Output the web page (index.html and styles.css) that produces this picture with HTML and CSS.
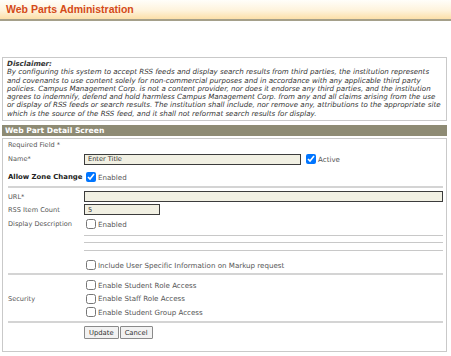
FILE: index.html
```html
<!DOCTYPE html>
<html lang="en">
<head>
  <meta charset="UTF-8" />
  <title>Web Parts Administration</title>
  <link rel="stylesheet" href="styles.css">
</head>
<body>
  <div class="page-header">
    <h1>Web Parts Administration</h1>
  </div>

  <div class="disclaimer">
    <b>Disclaimer:</b><br>
    By configuring this system to accept RSS feeds and display search results from third parties, the institution represents<br>
    and covenants to use content solely for non-commercial purposes and in accordance with any applicable third party<br>
    policies. Campus Management Corp. is not a content provider, nor does it endorse any third parties, and the institution<br>
    agrees to indemnify, defend and hold harmless Campus Management Corp. from any and all claims arising from the use<br>
    or display of RSS feeds or search results. The institution shall include, nor remove any, attributions to the appropriate site<br>
    which is the source of the RSS feed, and it shall not reformat search results for display.
  </div>

  <div class="section-bar">Web Part Detail Screen</div>

  <div class="detail-box">
    <div class="row row-required">Required Field *</div>

    <div class="row row-name">
      <label class="label">Name*</label>
      <input type="text" class="field field-title" value="Enter Title" />
      <input type="checkbox" class="check" checked />
      <span class="check-text">Active</span>
    </div>

    <div class="row row-zone">
      <label class="label label-bold">Allow Zone Change</label>
      <input type="checkbox" class="check" checked />
      <span class="check-text">Enabled</span>
    </div>

    <div class="rule rule-zone"></div>

    <div class="row row-url">
      <label class="label">URL*</label>
      <input type="text" class="field field-url" value="" />
    </div>

    <div class="row row-count">
      <label class="label">RSS Item Count</label>
      <input type="text" class="field field-count" value="5" />
    </div>

    <div class="row row-desc">
      <label class="label">Display Description</label>
      <input type="checkbox" class="check" />
      <span class="check-text">Enabled</span>
    </div>

    <div class="sub-rules">
      <div class="rule-sub sub-1"></div>
      <div class="rule-sub sub-2"></div>
      <div class="rule-sub sub-3"></div>
    </div>

    <div class="row row-include">
      <span class="label"></span>
      <input type="checkbox" class="check" />
      <span class="check-text">Include User Specific Information on Markup request</span>
    </div>

    <div class="rule rule-include"></div>

    <div class="security">
      <span class="label">Security</span>
      <div class="security-list">
        <div class="sec-item"><input type="checkbox" class="check" /><span class="check-text">Enable Student Role Access</span></div>
        <div class="sec-item"><input type="checkbox" class="check" /><span class="check-text">Enable Staff Role Access</span></div>
        <div class="sec-item"><input type="checkbox" class="check" /><span class="check-text">Enable Student Group Access</span></div>
      </div>
    </div>

    <div class="rule rule-security"></div>

    <div class="buttons">
      <button type="button">Update</button>
      <button type="button">Cancel</button>
    </div>
  </div>
</body>
</html>
```

FILE: styles.css
```css
body {
  margin: 0;
  font-family: "DejaVu Sans", Verdana, sans-serif;
  font-size: 6.6px;
  color: #555;
  background: #fff;
}
.page-header {
  height: 19px;
  background: linear-gradient(to bottom, #fffefa 0%, #fef3dc 55%, #fcdfa8 100%);
  border-bottom: 2px solid #a5a08a;
}
h1 {
  margin: 0;
  padding: 3px 0 0 6px;
  font-family: "Liberation Sans", Arial, sans-serif;
  font-size: 10.5px;
  font-weight: bold;
  color: #d44a18;
  line-height: 12px;
}
.disclaimer {
  margin: 36px 4px 0 2px;
  border: 1px solid #c9c9c9;
  padding: 2px 4px 2px 4px;
  font-style: italic;
  font-size: 7.1px;
  line-height: 8.3px;
  color: #333;
  white-space: nowrap;
  overflow: hidden;
}
.disclaimer b {
  font-weight: bold;
}
.section-bar {
  margin: 4px 4px 0 2px;
  height: 11px;
  line-height: 11px;
  padding-left: 3px;
  background: #8e8b74;
  color: #fff;
  font-weight: bold;
  font-size: 7.6px;
}
.detail-box {
  margin: 2px 4px 0 2px;
  border: 1px solid #c9c9c9;
  padding: 1px 3px 12px 5px;
}
.row {
  display: flex;
  align-items: center;
  white-space: nowrap;
}
.row-required {
  height: 10px;
}
.row-name {
  height: 12px;
  margin-top: 3px;
}
.row-zone {
  height: 12px;
  margin-top: 6px;
}
.label {
  width: 76px;
  flex: none;
}
.label-bold {
  font-weight: bold;
  font-size: 6.9px;
  color: #222;
}
.field {
  box-sizing: border-box;
  height: 11px;
  margin: 0;
  padding: 0 3px;
  border: 1px solid #3c3c3c;
  background: #f1f0e3;
  font-family: "DejaVu Sans", Verdana, sans-serif;
  font-size: 6.6px;
  color: #333;
  outline: none;
}
.field-title {
  width: 217px;
}
.field-url {
  width: 359px;
}
.field-count {
  width: 76px;
}
.check {
  width: 10px;
  height: 10px;
  margin: 0 2px 0 2px;
  flex: none;
}
.row-name .check {
  margin-left: 5px;
}
.check-text {
  font-size: 7.1px;
}
.rule {
  height: 0;
  border-top: 2px solid #d4d4d4;
}
.rule-zone {
  margin: 3px 0 3px 0;
}
.row-url {
  height: 11px;
}
.row-count {
  height: 11px;
  margin-top: 2px;
}
.row-desc {
  height: 12px;
  margin-top: 3px;
}
.sub-rules {
  margin-left: 76px;
}
.rule-sub {
  height: 0;
  border-top: 1px solid #c8c8c8;
}
.sub-1 {
  margin-top: 5px;
}
.sub-2 {
  margin-top: 6px;
}
.sub-3 {
  margin-top: 7px;
}
.row-include {
  height: 12px;
  margin-top: 8px;
}
.rule-include {
  margin: 2px 0 4px 0;
}
.security {
  display: flex;
  align-items: center;
}
.security-list {
  display: flex;
  flex-direction: column;
  gap: 1.5px;
}
.sec-item {
  display: flex;
  align-items: center;
  height: 12px;
  white-space: nowrap;
}
.rule-security {
  margin: 3px 0 3px 0;
}
.buttons {
  padding-left: 76px;
  display: flex;
  gap: 1px;
}
button {
  height: 13px;
  padding: 0 4px;
  margin: 0;
  border: 1px solid #8a8a8a;
  background: #f2f2f2;
  font-family: "DejaVu Sans", Verdana, sans-serif;
  font-size: 6.8px;
  color: #333;
  border-radius: 1px;
}
```
